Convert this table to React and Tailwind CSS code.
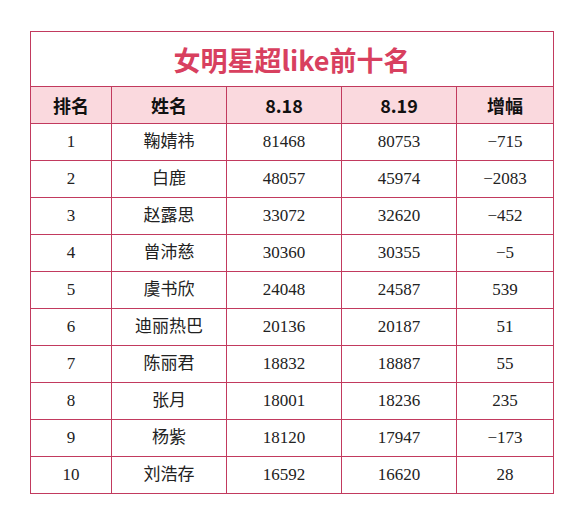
const rows = [
  [1, "鞠婧祎", 81468, 80753, "−715"],
  [2, "白鹿", 48057, 45974, "−2083"],
  [3, "赵露思", 33072, 32620, "−452"],
  [4, "曾沛慈", 30360, 30355, "−5"],
  [5, "虞书欣", 24048, 24587, "539"],
  [6, "迪丽热巴", 20136, 20187, "51"],
  [7, "陈丽君", 18832, 18887, "55"],
  [8, "张月", 18001, 18236, "235"],
  [9, "杨紫", 18120, 17947, "−173"],
  [10, "刘浩存", 16592, 16620, "28"],
]

const cell = "border border-[#c23a5e] text-center p-0"

export default function App() {
  return (
    <div className="w-[584px] h-[520px] bg-white pt-[31px] pl-[30px]">
      <table className="border-collapse table-fixed w-[523px]">
        <colgroup>
          <col className="w-[81px]" />
          <col className="w-[115px]" />
          <col className="w-[115px]" />
          <col className="w-[115px]" />
          <col className="w-[97px]" />
        </colgroup>
        <thead>
          <tr className="h-[55px]">
            <th colSpan={5} className={cell + " text-[27px] font-bold text-[#d8405f] [font-family:'Noto_Sans_CJK_SC',sans-serif] leading-none"}>
              女明星超like前十名
            </th>
          </tr>
          <tr className="h-[37px] bg-[#fad9de] text-[18px] font-bold text-[#111] [font-family:'Noto_Sans_CJK_SC',sans-serif]">
            <th className={cell}>排名</th>
            <th className={cell}>姓名</th>
            <th className={cell}>8.18</th>
            <th className={cell}>8.19</th>
            <th className={cell}>增幅</th>
          </tr>
        </thead>
        <tbody className="text-[17px] text-[#222] [font-family:'Liberation_Serif','Noto_Sans_CJK_SC',serif]">
          {rows.map((r) => (
            <tr key={r[0]} className="h-[37px]">
              {r.map((v, i) => (
                <td key={i} className={cell}>{v}</td>
              ))}
            </tr>
          ))}
        </tbody>
      </table>
    </div>
  )
}
